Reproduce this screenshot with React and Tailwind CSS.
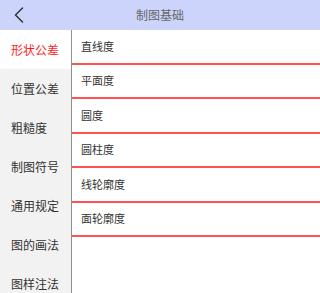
import { useState } from 'react';

const categories = ['形状公差', '位置公差', '粗糙度', '制图符号', '通用规定', '图的画法', '图样注法'];
const items = ['直线度', '平面度', '圆度', '圆柱度', '线轮廓度', '面轮廓度'];

export default function App() {
  const [active, setActive] = useState(0);

  return (
    <div
      className="w-[320px] h-[293px] overflow-hidden bg-white flex flex-col"
      style={{ fontFamily: '"Noto Sans CJK SC", "Noto Sans", sans-serif' }}
    >
      <header className="h-[30px] shrink-0 bg-[#ccd4fb] relative flex items-center justify-center">
        <button className="absolute left-[12px] top-[6px] w-[14px] h-[18px] flex items-center justify-center">
          <svg width="10" height="16" viewBox="0 0 10 16" fill="none">
            <path d="M8.5 1 L1.5 8 L8.5 15" stroke="#333" strokeWidth="1.5" strokeLinecap="round" strokeLinejoin="round" />
          </svg>
        </button>
        <h1 className="text-[12px] text-[#666] leading-none">制图基础</h1>
      </header>

      <div className="flex flex-1 min-h-0">
        <nav className="w-[72px] shrink-0 bg-[#f2f2f2] border-r border-[#8f8f8f] flex flex-col">
          {categories.map((c, i) => (
            <div
              key={c}
              onClick={() => setActive(i)}
              className={
                'h-[39px] shrink-0 flex items-center pl-[11px] text-[12px] leading-none ' +
                (i === active ? 'bg-white text-[#ff1a1a]' : 'text-[#333]')
              }
            >
              {c}
            </div>
          ))}
        </nav>

        <ul className="flex-1 flex flex-col">
          {items.map((t) => (
            <li
              key={t}
              className="h-[34.5px] shrink-0 border-b-2 border-[#ff5252] flex items-center pl-[9px] text-[11px] text-[#333] leading-none"
            >
              {t}
            </li>
          ))}
        </ul>
      </div>
    </div>
  );
}
